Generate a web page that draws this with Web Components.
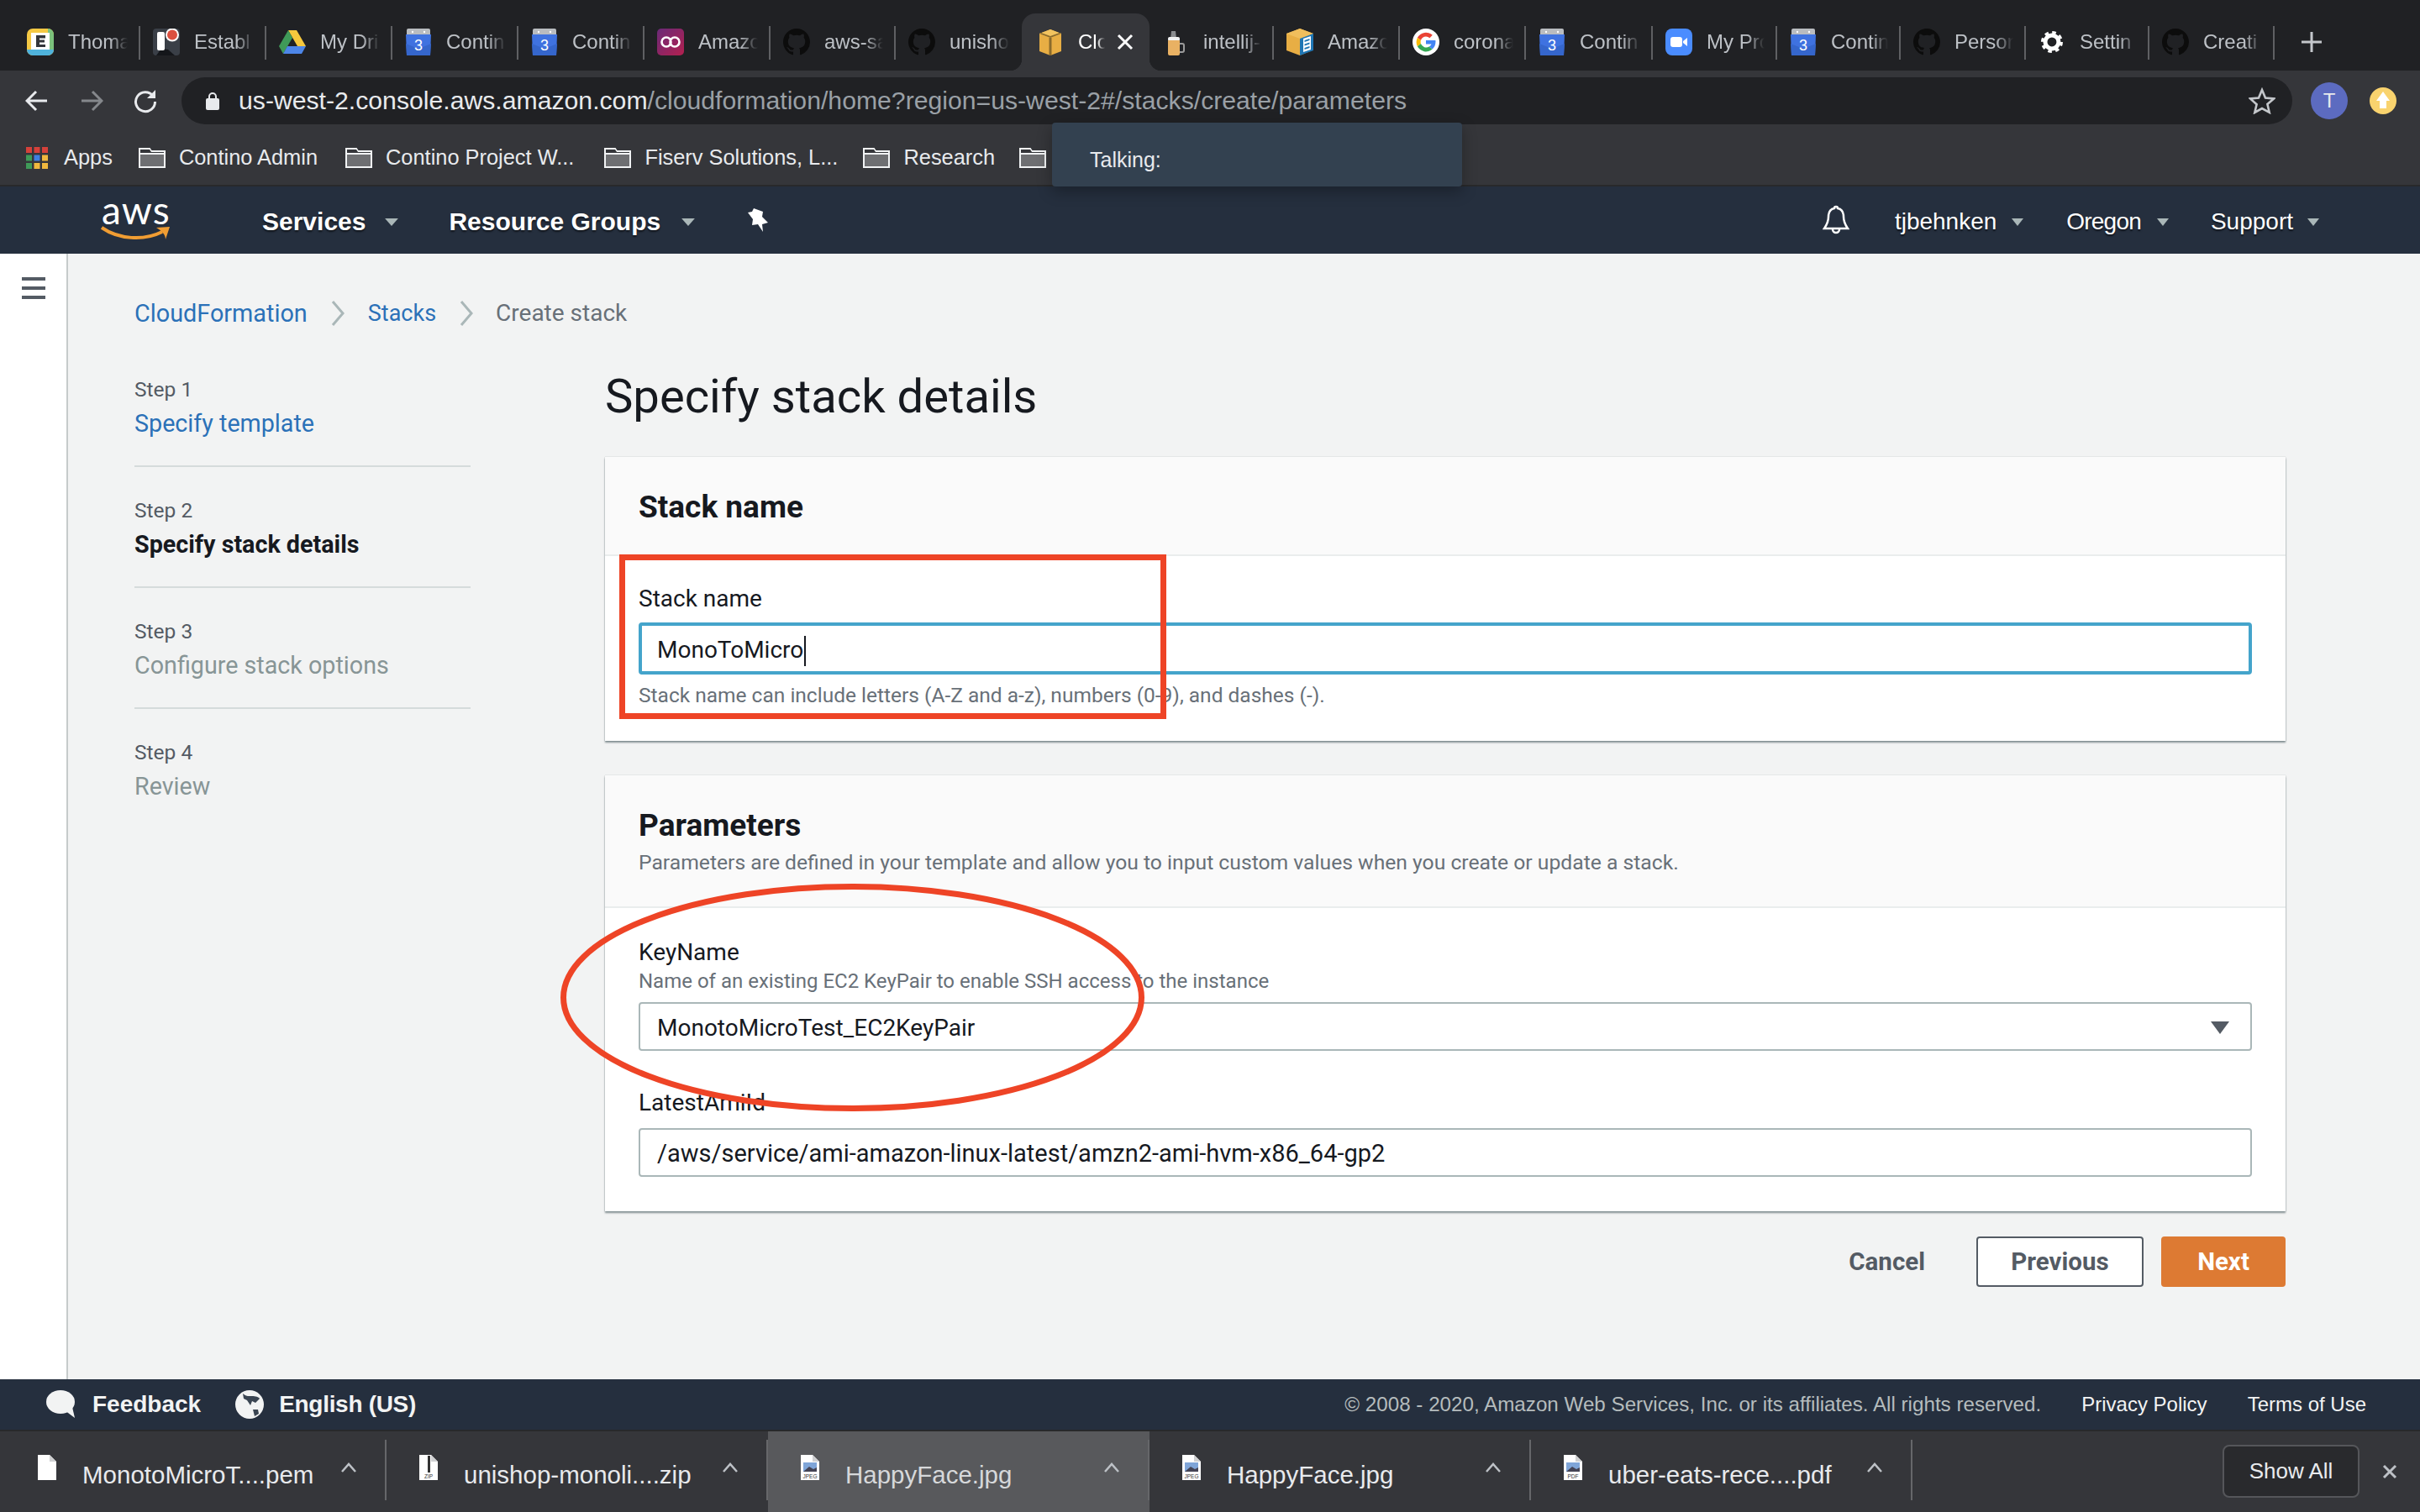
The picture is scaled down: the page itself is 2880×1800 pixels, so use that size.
<!DOCTYPE html>
<html lang="en">
<head>
<meta charset="utf-8">
<title>Specify stack details</title>
<style>
html,body{margin:0;padding:0;width:2880px;height:1800px;overflow:hidden;background:#f2f3f3}
body{position:relative;display:flex;flex-direction:column;font-family:"Liberation Sans",Arial,sans-serif}
</style>
</head>
<body>
<tab-strip>
  <browser-tab w="150" icon="e">Thoma</browser-tab>
  <browser-tab w="150" icon="rec">Establ</browser-tab>
  <browser-tab w="150" icon="drive">My Dri</browser-tab>
  <browser-tab w="150" icon="cal">Contin</browser-tab>
  <browser-tab w="150" icon="cal">Contin</browser-tab>
  <browser-tab w="150" icon="co">Amazo</browser-tab>
  <browser-tab w="149" icon="gh">aws-sa</browser-tab>
  <browser-tab w="150" icon="gh" nosep>unisho</browser-tab>
  <browser-tab w="152" icon="cube" active>Clo</browser-tab>
  <browser-tab w="148" icon="beer">intellij-</browser-tab>
  <browser-tab w="150" icon="box">Amazo</browser-tab>
  <browser-tab w="150" icon="g">corona</browser-tab>
  <browser-tab w="151" icon="cal">Contin</browser-tab>
  <browser-tab w="148" icon="zoom">My Pro</browser-tab>
  <browser-tab w="147" icon="cal">Contin</browser-tab>
  <browser-tab w="149" icon="gh">Person</browser-tab>
  <browser-tab w="147" icon="gear">Settin</browser-tab>
  <browser-tab w="149" icon="gh">Creati</browser-tab>
</tab-strip>
<url-bar></url-bar>
<bookmark-bar>
  <bookmark-item kind="apps" style="margin-right:31px">Apps</bookmark-item>
  <bookmark-item style="margin-right:33px">Contino Admin</bookmark-item>
  <bookmark-item style="margin-right:36px">Contino Project W...</bookmark-item>
  <bookmark-item style="margin-right:30px">Fiserv Solutions, L...</bookmark-item>
  <bookmark-item style="margin-right:29px">Research</bookmark-item>
  <bookmark-item></bookmark-item>
</bookmark-bar>
<aws-nav></aws-nav>
<console-page>
  <side-rail slot="rail"></side-rail>
  <bread-crumbs></bread-crumbs>
  <div style="display:flex">
    <wizard-steps></wizard-steps>
    <div style="width:2000px;margin-left:160px">
      <page-title>Specify stack details</page-title>
      <form-card heading="Stack name">
        <form-field label="Stack name" value="MonoToMicro" focused hint-below="Stack name can include letters (A-Z and a-z), numbers (0-9), and dashes (-)."></form-field>
      </form-card>
      <form-card heading="Parameters" sub="Parameters are defined in your template and allow you to input custom values when you create or update a stack." style="margin-top:41px">
        <form-field label="KeyName" hint-above="Name of an existing EC2 KeyPair to enable SSH access to the instance" value="MonotoMicroTest_EC2KeyPair" select></form-field>
        <form-field label="LatestAmiId" wide value="/aws/service/ami-amazon-linux-latest/amzn2-ami-hvm-x86_64-gp2" style="margin-top:41px"></form-field>
      </form-card>
      <action-row></action-row>
    </div>
  </div>
</console-page>
<aws-footer></aws-footer>
<download-bar>
  <download-item kind="blank">MonotoMicroT....pem</download-item>
  <download-item kind="ZIP">unishop-monoli....zip</download-item>
  <download-item kind="JPEG" hot>HappyFace.jpg</download-item>
  <download-item kind="JPEG">HappyFace.jpg</download-item>
  <download-item kind="PDF">uber-eats-rece....pdf</download-item>
</download-bar>
<talking-toast>Talking:</talking-toast>
<mark-rect></mark-rect>
<mark-ellipse></mark-ellipse>

<script>
const GH='M8 0C3.58 0 0 3.58 0 8c0 3.54 2.29 6.53 5.47 7.59.4.07.55-.17.55-.38 0-.19-.01-.82-.01-1.49-2.01.37-2.53-.49-2.69-.94-.09-.23-.48-.94-.82-1.13-.28-.15-.68-.52-.01-.53.63-.01 1.08.58 1.23.82.72 1.21 1.87.87 2.33.66.07-.52.28-.87.51-1.07-1.78-.2-3.64-.89-3.64-3.95 0-.87.31-1.59.82-2.15-.08-.2-.36-1.02.08-2.12 0 0 .67-.21 2.2.82.64-.18 1.32-.27 2-.27.68 0 1.36.09 2 .27 1.53-1.04 2.2-.82 2.2-.82.44 1.1.16 1.92.08 2.12.51.56.82 1.27.82 2.15 0 3.07-1.87 3.75-3.65 3.95.29.25.54.73.54 1.48 0 1.07-.01 1.93-.01 2.2 0 .21.15.46.55.38A8.013 8.013 0 0016 8c0-4.42-3.58-8-8-8z';
const ICONS={
 e:`<rect width="32" height="32" rx="7" fill="#f5c944"/><path d="M25 0a7 7 0 0 1 7 7v18H25z" fill="#7cc27c"/><path d="M0 25h32a7 7 0 0 1-7 7H7a7 7 0 0 1-7-7z" fill="#4fb3dc"/><rect x="5" y="5" width="22" height="20" fill="#fff"/><path d="M11 8h11v3.500h-7v2h6v3h-6v2.500h7V22H11z" fill="#33353b"/>`,
 rec:`<rect width="32" height="32" rx="4" fill="#3a3f47"/><path d="M4 32l6-8 8 1 8 7z" fill="#14161a"/><rect x="5" y="4" width="9" height="22" rx="2" fill="#fff"/><circle cx="23" cy="7.500" r="8" fill="#fff"/><circle cx="23" cy="7.500" r="6" fill="#db5040"/>`,
 drive:`<path d="M11 2h10l11 19H22z" fill="#f6c83d"/><path d="M11 2L0 21l5 9L16 11z" fill="#3f9a58"/><path d="M5 30h22l5-9H10z" fill="#4d86e8"/>`,
 cal:`<rect x="2" y="0" width="28" height="10" rx="2" fill="#b9bcc0"/><circle cx="9" cy="4" r="1.200" fill="#fff"/><circle cx="23" cy="4" r="1.200" fill="#fff"/><path d="M1 7h30l-1 25H2z" fill="#3f72e0"/><path d="M2 32l-1-14 15 6 15-6-1 14z" fill="#3566cc"/><text x="16" y="26" text-anchor="middle" font-family="Liberation Sans" font-size="18" fill="#fff">3</text>`,
 co:`<defs><linearGradient id="cg" x1="0" y1="0" x2="1" y2="1"><stop offset="0" stop-color="#6a2a78"/><stop offset="1" stop-color="#b3204f"/></linearGradient></defs><rect width="32" height="32" rx="5" fill="url(#cg)"/><circle cx="11" cy="16" r="5.500" fill="none" stroke="#fff" stroke-width="2.600"/><circle cx="21" cy="16" r="5.500" fill="none" stroke="#fff" stroke-width="2.600"/>`,
 gh:`<path transform="scale(2)" d="${GH}" fill="#0c0c0c"/>`,
 cube:`<path d="M16 1l13 5v21l-13 5-13-5V6z" fill="#e8ae44"/><path d="M3 6l13 5 13-5-13-5z" fill="#f2c35f"/><path d="M14.500 11h3v21h-3z" fill="#8a6a2c"/><path d="M3 6l13 5 13-5-2-1-11 4L5 5z" fill="#8a6a2c"/>`,
 beer:`<path d="M11 3h5l1 9h-7z" fill="#8a8c8f"/><rect x="7" y="10" width="14" height="5" rx="2" fill="#f2f2f2"/><path d="M7 14h14v16a2 2 0 0 1-2 2H9a2 2 0 0 1-2-2z" fill="#e9b163"/><path d="M21 18h3a2 2 0 0 1 2 2v6a2 2 0 0 1-2 2h-3" fill="none" stroke="#9a9a9a" stroke-width="2"/>`,
 box:`<path d="M16 0l16 6-4 2v19l-12 5-16-6V6z" fill="#e8ae44"/><path d="M0 6l16-6 16 6-16 6z" fill="#f0be5c"/><path d="M16 12l16-6v20l-16 6z" fill="#1f76b4"/><path d="M20 12l9-3v16l-9 3z" fill="#fff"/><path d="M21.500 14l6-2v2l-6 2zM21.500 18.500l6-2v2l-6 2zM21.500 23l6-2v2l-6 2z" fill="#1f76b4"/>`,
 g:`<circle cx="16" cy="16" r="16" fill="#fff"/><path d="M16 9.500a6.500 6.500 0 0 1 4.400 1.700l3.400-3.400A11.500 11.500 0 0 0 5.900 10.800l4 3.100A6.800 6.800 0 0 1 16 9.500z" fill="#ea4335"/><path d="M5.900 10.800a11.500 11.500 0 0 0 0 10.400l4-3.100a6.800 6.800 0 0 1 0-4.200z" fill="#fbbc05"/><path d="M5.900 21.200A11.500 11.500 0 0 0 23.600 24.600l-3.800-3a6.900 6.900 0 0 1-9.900-3.500z" fill="#34a853"/><path d="M27.300 14H16v4.600h6.500a5.600 5.600 0 0 1-2.700 3l3.800 3c2.400-2.200 3.900-5.500 3.900-9.200 0-.5-.1-1-.2-1.400z" fill="#4285f4"/>`,
 zoom:`<rect width="32" height="32" rx="8" fill="#4a8cff"/><rect x="6" y="10" width="14" height="12" rx="3" fill="#fff"/><path d="M21 15l5-4v10l-5-4z" fill="#fff"/>`,
 gear:`<g transform="translate(2.500 2.500) scale(.84)"><circle cx="16" cy="16" r="9.500" fill="none" stroke="#fff" stroke-width="6"/><circle cx="16" cy="16" r="13" fill="none" stroke="#fff" stroke-width="5" stroke-dasharray="5.200 5"/></g>`
};
const def=(name,css,html,init)=>customElements.define(name,class extends HTMLElement{
  constructor(){super();this.attachShadow({mode:'open'})}
  connectedCallback(){
    const h=typeof html==='function'?html(this):html;
    this.shadowRoot.innerHTML=`<style>${css}</style>${h}`;
    if(init)init(this);
  }
});
const caret=(w=16,ml=22)=>`<svg width="${w}" height="11" viewBox="0 0 16 11" preserveAspectRatio="none" style="margin-left:${ml}px;margin-top:4px;display:block;flex:none"><path d="M1 1h14L8 10z" fill="#aab7b8"/></svg>`;

def('tab-strip',`:host{display:flex;height:84px;box-sizing:border-box;padding:16px 0 0 17px;background:#202124;flex:none}
 .plus{margin:19px 0 0 30px;width:28px;height:28px;flex:none}`,
 `<slot></slot><svg class="plus" viewBox="0 0 28 28"><path d="M14 3v24M2 15h24" stroke="#c4c7cb" stroke-width="3"/></svg>`);

def('browser-tab',`:host{display:flex;align-items:center;height:68px;box-sizing:border-box;padding-left:15px;position:relative;flex:none;font:24px "Liberation Sans",sans-serif;color:#bdc1c6}
 svg.i{width:32px;height:32px;flex:none;margin-right:17px}
 .t{flex:1;min-width:0;overflow:hidden;white-space:nowrap;-webkit-mask-image:linear-gradient(90deg,#000 70%,transparent 100%);mask-image:linear-gradient(90deg,#000 70%,transparent 100%)}
 .s{width:2px;height:40px;background:#5f6063;flex:none;margin:2px 0 0 13px}
 :host([active]){background:#35363a;border-radius:16px 16px 0 0;color:#fff;padding-left:18px}
 :host([active]) .s{display:none}
 :host([active]) .t{flex:0 0 32px}
 :host([nosep]) .s{background:transparent}
 .x{width:22px;height:22px;margin-left:13px;flex:none}
 .fl,.fr{position:absolute;bottom:0;width:14px;height:14px}
 .fl{left:-14px;background:radial-gradient(circle at 0 0,transparent 14px,#35363a 14.500px)}
 .fr{right:-14px;background:radial-gradient(circle at 100% 0,transparent 14px,#35363a 14.500px)}`,
 el=>{
  const a=el.hasAttribute('active');
  el.style.width=el.getAttribute('w')+'px';
  return `<svg class="i" viewBox="0 0 32 32">${ICONS[el.getAttribute('icon')]}</svg><span class="t"><slot></slot></span>`+
   (a?`<svg class="x" viewBox="0 0 22 22"><path d="M3 3l16 16M19 3L3 19" stroke="#fff" stroke-width="3"/></svg><i class="fl"></i><i class="fr"></i>`:`<i class="s"></i>`);
 });

def('url-bar',`:host{display:flex;align-items:center;height:64px;box-sizing:border-box;padding:8px 0 0 30px;background:#35363a;flex:none}
 .pill{display:flex;align-items:center;width:2512px;height:56px;border-radius:28px;background:#202124;margin-left:28px;font:30.200px "Liberation Sans",sans-serif;color:#9aa0a6;padding:0 20px 0 29px;box-sizing:border-box}
 b{font-weight:400;color:#e8eaed}
 .u{flex:1;margin-left:23px;white-space:nowrap}
 .av{width:44px;height:44px;border-radius:50%;background:#5c6bc0;color:#e8eaed;display:flex;align-items:center;justify-content:center;font-size:24px;margin-left:22px;font-family:"Liberation Sans",sans-serif}
 .up{margin-left:26px;display:block}`,
 `<svg width="28" height="28" viewBox="0 0 28 28" style="margin-right:37px;flex:none"><path d="M26 14H3M13 3L2 14l11 11" fill="none" stroke="#e8eaed" stroke-width="3"/></svg>
 <svg width="28" height="28" viewBox="0 0 28 28" style="margin-right:35px;flex:none"><path d="M2 14h23M15 3l11 11-11 11" fill="none" stroke="#85888c" stroke-width="3"/></svg>
 <svg width="30" height="30" viewBox="0 0 30 30" style="flex:none;margin-right:0"><path d="M24 9a11.500 11.500 0 1 0 2.500 7" fill="none" stroke="#e8eaed" stroke-width="3"/><path d="M27 2v10H17z" fill="#e8eaed"/></svg>
 <div class="pill"><svg width="16" height="22" viewBox="0 0 16 22" style="flex:none"><path d="M4 9V6a4 4 0 0 1 8 0v3" fill="none" stroke="#e8eaed" stroke-width="2"/><rect y="8" width="16" height="14" rx="2" fill="#e8eaed"/></svg>
 <span class="u"><b>us-west-2.console.aws.amazon.com</b>/cloudformation/home?region=us-west-2#/stacks/create/parameters</span>
 <svg width="32" height="32" viewBox="0 0 32 32"><path d="M16 3l4 9.500 10 .9-7.600 6.600 2.300 9.800L16 25l-8.700 5 2.300-9.800L2 13.400l10-.9z" fill="none" stroke="#c4c7cb" stroke-width="2.600"/></svg></div>
 <div class="av">T</div>
 <svg class="up" width="32" height="32" viewBox="0 0 32 32"><circle cx="16" cy="16" r="16" fill="#f9d36e"/><path d="M16 5l8 11h-4v9h-8v-9H8z" fill="#fff"/></svg>`);

def('bookmark-bar',`:host{display:flex;align-items:center;height:74px;box-sizing:border-box;padding:7px 0 0 31px;background:#35363a;border-bottom:2px solid #28292b;flex:none}`,`<slot></slot>`);
def('bookmark-item',`:host{display:inline-flex;align-items:center;font:25.400px "Liberation Sans",sans-serif;color:#e8eaed;white-space:nowrap}
 svg{flex:none}`,
 el=>{
  const colors=['#d5413a','#d5413a','#d5413a','#3f9a58','#3f7fe0','#f0b83e','#3f9a58','#f0b83e','#f0b83e'];
  if(el.getAttribute('kind')==='apps'){
    return `<svg width="26" height="26" viewBox="0 0 26 26" style="margin-right:19px">${colors.map((c,i)=>`<rect x="${(i%3)*9.500}" y="${Math.floor(i/3)*9.500}" width="7" height="7" fill="${c}"/>`).join('')}</svg><slot></slot>`;
  }
  return `<svg width="32" height="26" viewBox="0 0 32 26" style="margin-right:16px"><path d="M1 24V2h12l2 3h16v19z" fill="#6e6f72" stroke="#f1f3f4" stroke-width="2"/><path d="M1 8h30" stroke="#f1f3f4" stroke-width="2"/><path d="M2 3h11l2 3h15v1H2z" fill="#35363a"/></svg><slot></slot>`;
 });

def('aws-nav',`:host{display:flex;align-items:center;height:80px;box-sizing:border-box;background:#252f3e;color:#fff;font:28px "Liberation Sans",sans-serif;padding-left:120px;flex:none;text-shadow:0 2px 2px rgba(0,0,0,.55)}
 .logo{width:82px;height:50px;position:relative;flex:none;margin-right:110px}
 .aws{position:absolute;left:1px;top:-12px;font:46px/50px Lato,sans-serif;color:#fff;letter-spacing:1px;text-shadow:none}
 .logo svg{position:absolute;left:0;top:31px}
 .m{font-weight:700;font-size:30px;padding-top:3px}
 .r{padding-top:3px}
 .sp{flex:1}`,
 `<div class="logo"><span class="aws">aws</span><svg width="82" height="20" viewBox="0 0 82 20"><path d="M1 3c20 14 50 16 72 5" fill="none" stroke="#f09d33" stroke-width="4"/><path d="M66 3l16-1-5 15c0-5-3-9-11-14z" fill="#f09d33"/></svg></div>
 <span class="m">Services</span>${caret(18,22)}
 <span class="m" style="margin-left:59px">Resource Groups</span>${caret(18,24)}
 <svg width="26" height="30" viewBox="0 0 26 30" style="margin-left:62px;flex:none"><path d="M7 1l11 4-1 6 7 7-7 2 1 9-6-9-7 1 1-7-6-8 5-1z" fill="#fff"/></svg>
 <span class="sp"></span>
 <svg width="32" height="36" viewBox="0 0 32 36" style="margin-right:54px;flex:none"><path d="M16 2a2 2 0 0 1 2 2c5 1 7 5 7 10 0 7 3 11 5 14H2c2-3 5-7 5-14 0-5 2-9 7-10a2 2 0 0 1 2-2z" fill="none" stroke="#fff" stroke-width="2.500"/><path d="M12 29a4 4 0 0 0 8 0" fill="none" stroke="#fff" stroke-width="2.500"/></svg>
 <span class="r">tjbehnken</span>${caret(16,17)}
 <span class="r" style="margin-left:50px;letter-spacing:-.8px">Oregon</span>${caret(16,18)}
 <span class="r" style="margin-left:49px">Support</span><span style="margin-right:119px">${caret(16,16)}</span>`);

def('console-page',`:host{display:flex;height:1340px;flex:none;background:#f2f3f3;font-family:Roboto,sans-serif}
 .c{flex:1;min-width:0;padding-left:79px}`,
 `<slot name="rail"></slot><div class="c"><slot></slot></div>`);
def('side-rail',`:host{display:block;width:81px;flex:none;box-sizing:border-box;background:#fff;border-right:2px solid #c6cbcb;padding:28px 0 0 26px}
 i{display:block;width:28px;height:4px;background:#545b64;margin-bottom:7px}`,`<i></i><i></i><i></i>`);
def('bread-crumbs',`:host{display:flex;align-items:center;height:40px;padding-top:51px;margin-bottom:-1px;font:28px/40px Roboto,sans-serif;color:#687078}
 a{color:#2b71b8}
 svg{margin:0 27px 0 27px;flex:none}
 svg.l{margin-right:26px}`,
 `<a style="font-size:28.800px">CloudFormation</a><svg width="18" height="32" viewBox="0 0 18 32"><path d="M3 2l12 14L3 30" fill="none" stroke="#aab7b8" stroke-width="3"/></svg><a style="font-size:27px">Stacks</a><svg class="l" width="18" height="32" viewBox="0 0 18 32"><path d="M3 2l12 14L3 30" fill="none" stroke="#aab7b8" stroke-width="3"/></svg><span>Create stack</span>`);
def('wizard-steps',`:host{display:block;width:400px;flex:none;padding-top:52px;font-family:Roboto,sans-serif}
 .s{font-size:24.500px;line-height:40px;color:#545b64}
 .n{font-size:28.700px;line-height:40px;color:#879596}
 .l{height:2px;background:#d5dbdb;margin:30px 0 32px}
 .a{color:#2b71b8}.b{color:#16191f;font-weight:700}`,
 `<div class="s">Step 1</div><div class="n a">Specify template</div><div class="l"></div>
 <div class="s">Step 2</div><div class="n b">Specify stack details</div><div class="l"></div>
 <div class="s">Step 3</div><div class="n">Configure stack options</div><div class="l"></div>
 <div class="s">Step 4</div><div class="n">Review</div>`);
def('page-title',`:host{display:block;margin:44px 0 36px;font:56.200px/72px Roboto,sans-serif;color:#16191f}`,`<slot></slot>`);
def('form-card',`:host{display:block;background:#fff;box-shadow:0 2px 2px rgba(0,28,36,.45),0 0 1px rgba(0,28,36,.3);font-family:Roboto,sans-serif}
 .h{background:#fafafa;border-bottom:2px solid #eaeded;padding:38px 40px 34px}
 h2{margin:0;font:700 37px/44px Roboto,sans-serif;color:#16191f}
 p{margin:4px 0 0;font:24.700px/36px Roboto,sans-serif;color:#687078}
 .b{padding:30px 40px 36px}`,
 el=>`<div class="h"><h2>${el.getAttribute('heading')}</h2>${el.getAttribute('sub')?`<p>${el.getAttribute('sub')}</p>`:''}</div><div class="b" style="${el.getAttribute('sub')?'padding:32px 40px 41px':''}"><slot></slot></div>`);
def('form-field',`:host{display:block;font-family:Roboto,sans-serif;color:#16191f}
 .l{font-size:28px;line-height:40px;padding-top:1px;margin-bottom:-1px}
 .ha{font-size:24px;line-height:30px;color:#687078}
 .hb{font-size:24.500px;line-height:36px;color:#687078;margin-top:7px}
 .i{display:flex;align-items:center;justify-content:space-between;height:58px;margin-top:10px;box-sizing:border-box;border:2px solid #aab7b8;border-radius:4px;background:#fff;padding:2px 25px 0 20px;font-size:28px;white-space:nowrap}
 .w{font-size:29px;margin-top:11px}
 .f{height:62px;margin-top:9px;border:4px solid #44a4cb;padding:6px 18px 0 18px}
 .c{display:inline-block;width:2px;height:36px;background:#16191f;vertical-align:middle;margin-left:1px}`,
 el=>{
  const f=el.hasAttribute('focused'),ha=el.getAttribute('hint-above'),hb=el.getAttribute('hint-below');
  return `<div class="l">${el.getAttribute('label')}</div>${ha?`<div class="ha">${ha}</div>`:''}
  <div class="i ${f?'f':''} ${el.hasAttribute('wide')?'w':''}"><span>${el.getAttribute('value')}${f?'<i class="c"></i>':''}</span>${el.hasAttribute('select')?'<svg width="22" height="15" viewBox="0 0 22 15"><path d="M0 0h22L11 15z" fill="#545b64"/></svg>':''}</div>
  ${hb?`<div class="hb">${hb}</div>`:''}`;
 });
def('action-row',`:host{display:flex;justify-content:flex-end;align-items:center;margin-top:30px;font:700 29.500px Roboto,sans-serif;color:#545b64}
 .c{margin-right:61px}
 .b{height:60px;display:flex;align-items:center;justify-content:center;box-sizing:border-box;border-radius:4px}
 .p{width:199px;background:#fff;border:2px solid #545b64}
 .n{width:148px;background:#dd7a33;color:#fff;margin-left:21px}`,
 `<span class="c">Cancel</span><div class="b p">Previous</div><div class="b n">Next</div>`);

def('aws-footer',`:host{display:flex;align-items:center;height:62px;box-sizing:border-box;background:#252f3e;border-bottom:2px solid #28292b;color:#fff;font:24px "Liberation Sans",sans-serif;flex:none;padding:0 64px 0 55px}
 b{font-size:28px;color:#f2f3f3}
 svg{flex:none}
 .g{color:#b5bcbd;margin-left:auto;font-size:24.200px}
 .w{color:#f2f3f3;margin-left:48px}`,
 `<svg width="36" height="34" viewBox="0 0 36 34" style="margin-right:19px"><ellipse cx="17" cy="14" rx="17" ry="14" fill="#f2f3f3"/><path d="M22 24l12 9-3-13z" fill="#f2f3f3"/></svg><b>Feedback</b>
 <svg width="34" height="34" viewBox="0 0 34 34" style="margin:0 18px 0 41px"><circle cx="17" cy="17" r="17" fill="#f2f3f3"/><path d="M9 4c4 4 8 3 11 3 4 0 8 1 9 3l-5 5-4-2-2 5-4-6-4-2zM21 23l6 0 1 5-5 3z" fill="#3a4552"/></svg><b style="letter-spacing:-.3px">English (US)</b>
 <span class="g">© 2008 - 2020, Amazon Web Services, Inc. or its affiliates. All rights reserved.</span><span class="w">Privacy Policy</span><span class="w">Terms of Use</span>`);

def('download-bar',`:host{display:flex;align-items:stretch;height:96px;background:#35363a;padding-left:6px;flex:none;position:relative}
 .s{margin:14px 0 15px auto;align-self:center;width:163px;height:63px;box-sizing:border-box;border:2px solid #55565a;border-radius:8px;background:#292a2d;color:#e8eaed;font:26px "Liberation Sans",sans-serif;display:flex;align-items:center;justify-content:center}
 svg{align-self:center;margin:0 27px 0 27px;flex:none}`,
 `<slot></slot><div class="s">Show All</div><svg width="18" height="18" viewBox="0 0 18 18"><path d="M2 2l14 14M16 2L2 16" stroke="#bdc1c6" stroke-width="3"/></svg>`);
def('download-item',`:host{display:flex;align-items:center;width:454px;box-sizing:border-box;padding-left:39px;position:relative;font:29.500px "Liberation Sans",sans-serif;color:#e8eaed;white-space:nowrap;flex:none}
 :host([hot]){background:#58595c;color:#d6d8da}
 svg.d{width:22px;height:30px;margin:-10px 31px 0 0;flex:none}
 .t{flex:1;padding-top:8px}
 svg.u{width:20px;height:12px;margin:-10px 33px 0 0;flex:none}
 .s{width:2px;height:72px;background:#66676a;flex:none;margin-top:-4px}`,
 el=>{
  const k=el.getAttribute('kind');
  const pic=k==='blank'?'':k==='ZIP'?`<path d="M10 1h3v20h-3z" fill="#333"/>`:`<rect x="3" y="9" width="16" height="11" fill="#7fa5d8"/><path d="M3 20l7-6 5 3 4-2v5z" fill="#445"/>`;
  const lab=k==='blank'?'':`<text x="11" y="28" text-anchor="middle" font-family="Liberation Sans" font-size="6.500" fill="#333">${k}</text>`;
  return `<svg class="d" viewBox="0 0 22 30"><path d="M0 0h14l8 8v22H0z" fill="#fff"/><path d="M14 0l8 8h-8z" fill="#cfd0d2"/>${pic}${lab}</svg><span class="t"><slot></slot></span><svg class="u" viewBox="0 0 20 12"><path d="M2 11l8-9 8 9" fill="none" stroke="#bdc1c6" stroke-width="2.500"/></svg><i class="s"></i>`;
 });

def('talking-toast',`:host{position:absolute;left:1252px;top:146px;width:488px;height:76px;box-sizing:border-box;background:#334150;border-radius:4px;box-shadow:0 6px 18px rgba(0,0,0,.3);color:#e8eaed;font:25px/76px "Liberation Sans",sans-serif;padding:6px 0 0 45px}`,`<slot></slot>`);
def('mark-rect',`:host{position:absolute;left:737px;top:660px;width:651px;height:196px;box-sizing:border-box;border:7px solid #ee4426}`,``);
def('mark-ellipse',`:host{position:absolute;left:667px;top:1052px;width:695px;height:271px}svg{display:block}`,
 `<svg width="695" height="271" viewBox="0 0 695 271"><ellipse cx="347.500" cy="135.500" rx="344" ry="132" fill="none" stroke="#ee4426" stroke-width="7"/></svg>`);
</script>
</body>
</html>
